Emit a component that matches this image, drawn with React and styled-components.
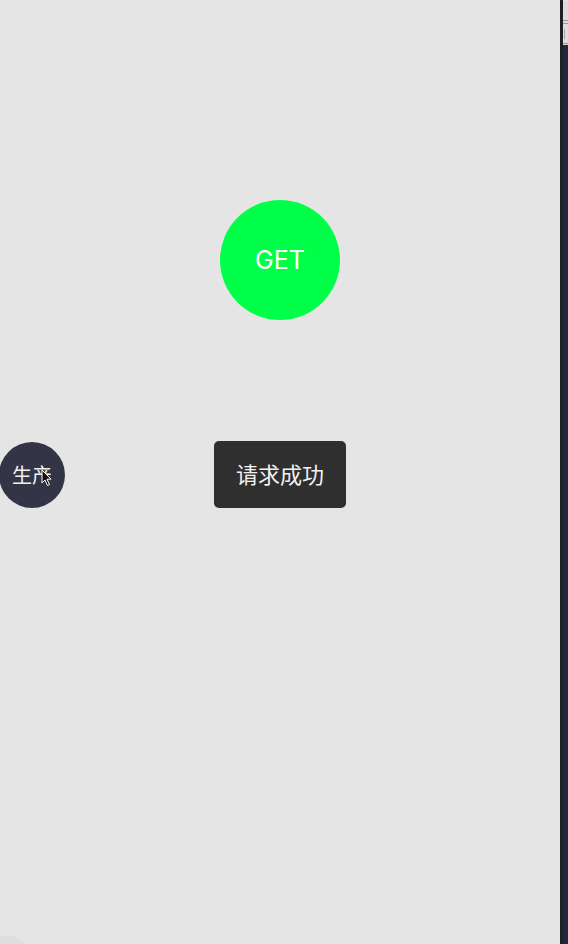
import React from "react";
import styled, { createGlobalStyle } from "styled-components";

const Global = createGlobalStyle`
  html, body { margin: 0; padding: 0; height: 100%; }
  body { background: #e5e5e5; font-family: Inter, "Noto Sans CJK SC", sans-serif; }
  #root { height: 100%; }
`;

const Page = styled.div`
  display: flex;
  width: 568px;
  height: 944px;
  overflow: hidden;
`;

const Main = styled.main`
  position: relative;
  flex: 1;
  background: #e5e5e5;
  display: flex;
  flex-direction: column;
  align-items: center;
  padding-top: 200px;
`;

const Divider = styled.div`
  width: 3px;
  background: #1d1f26;
`;

const Side = styled.aside`
  width: 5px;
  display: flex;
  flex-direction: column;
  background: #23273a;
`;

const SideTop = styled.div`
  height: 44px;
  background: #dcdcdc;
  border-top: 1px solid #e4e4e4;
  display: flex;
  flex-direction: column;
`;

const SideLine = styled.div`
  height: ${(p) => p.$h}px;
  border-bottom: 1px solid #9a9a9a;
  display: flex;
  align-items: center;
  padding-left: 1px;
`;

const GlyphStub = styled.div`
  width: 1px;
  height: 10px;
  background: #a8a8a8;
`;

const GetButton = styled.button`
  width: 120px;
  height: 120px;
  border-radius: 50%;
  border: none;
  background: #00ff48;
  color: #ffffff;
  font-family: Inter, sans-serif;
  font-size: 25px;
  font-weight: 400;
  padding: 0;
  display: flex;
  align-items: center;
  justify-content: center;
`;

const Toast = styled.div`
  margin-top: 121px;
  width: 132px;
  height: 67px;
  box-sizing: border-box;
  padding-bottom: 3px;
  border-radius: 5px;
  background: #2f2f2f;
  color: #f2f2f2;
  font-family: "Noto Sans CJK SC", sans-serif;
  font-size: 22px;
  display: flex;
  align-items: center;
  justify-content: center;
`;

const EnvBall = styled.div`
  position: absolute;
  left: -1px;
  top: 442px;
  width: 66px;
  height: 66px;
  box-sizing: border-box;
  padding-bottom: 2px;
  border-radius: 50%;
  background: #333547;
  color: #f0f0f0;
  font-family: "Noto Sans CJK SC", sans-serif;
  font-size: 20px;
  display: flex;
  align-items: center;
  justify-content: center;
`;

const Cursor = styled.svg`
  position: absolute;
  left: 41px;
  top: 469px;
`;

const Corner = styled.div`
  position: absolute;
  left: -10px;
  bottom: -20px;
  width: 36px;
  height: 28px;
  border-radius: 50%;
  background: #dedede;
`;

export default function App() {
  return (
    <>
      <Global />
      <Page>
        <Main>
          <GetButton>GET</GetButton>
          <Toast>请求成功</Toast>
          <EnvBall>生产</EnvBall>
          <Cursor width="12" height="18" viewBox="0 0 12 18">
            <path d="M1 1 L1 14 L4 11 L6.5 16.5 L8.5 15.6 L6 10.2 L10 10.2 Z" fill="#111" stroke="#fff" strokeWidth="1" strokeLinejoin="round" />
          </Cursor>
          <Corner />
        </Main>
        <Divider />
        <Side>
          <SideTop>
            <SideLine $h={19} />
            <SideLine $h={2} />
            <SideLine $h={19}>
              <GlyphStub />
            </SideLine>
          </SideTop>
        </Side>
      </Page>
    </>
  );
}
